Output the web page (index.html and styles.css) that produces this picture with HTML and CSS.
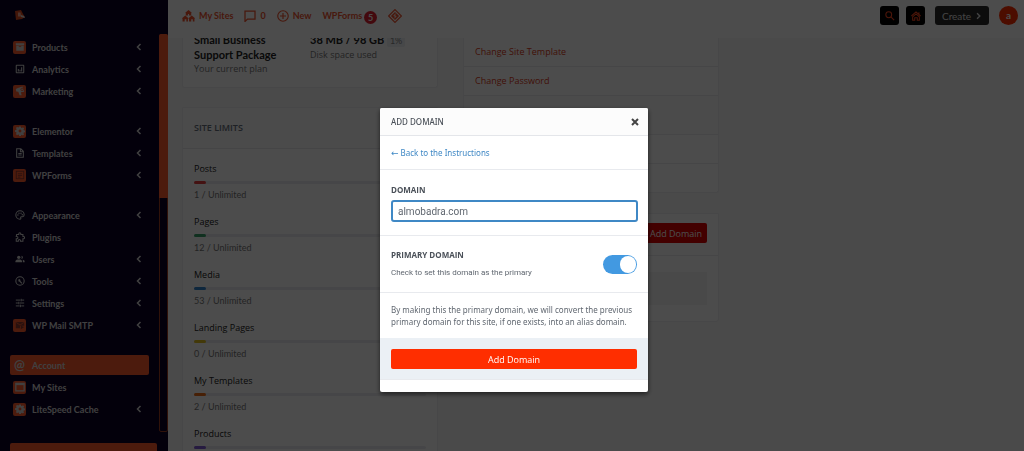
FILE: index.html
```
<!DOCTYPE html>
<html lang="en">
  <head>
    <meta charset="UTF-8" />
    <meta name="viewport" content="width=device-width, initial-scale=1.0" />
    <title>Account - Add Domain</title>
    <link rel="stylesheet" href="styles.css">
  </head>
  <body>
    <svg class="sprite" aria-hidden="true">
      <symbol id="chevron" viewBox="0 0 10 10"><path d="M6.500 2 3.500 5l3 3" fill="none" stroke="currentColor" stroke-width="1.500"/></symbol>
      <symbol id="gear" viewBox="0 0 24 24"><path fill="currentColor" fill-rule="evenodd" d="M10 1h4l.6 3 2 .9L19.200 3.200 22 6l-1.700 2.500.8 1.900 2.900.6v4l-3 .6-.8 1.900L21.900 20l-2.900 2.800-2.400-1.700-2 .8L14 24h-4l-.6-3-2-.8L4.900 22 2.100 19.100l1.700-2.400-.8-2L0 14v-4l3-.6.8-2L2.100 5 5 2.100l2.400 1.700 2-.8zM12 8.500a3.500 3.500 0 1 0 0 7 3.500 3.500 0 0 0 0-7z"/></symbol>
    </svg>

    <div class="page">
      <aside class="sidebar">
        <div class="brand">
          <svg width="12" height="12" viewBox="0 0 12 12"><path d="M1 2 7 1l2 4 2 3-3 2-6 1z" fill="#e04a20"/><path d="M4 3.500h2.500l.5 4H4z" fill="#ffb09a"/><path d="m7 6 3 1 1 2-4-1z" fill="#ddd"/></svg>
        </div>
        <div class="side-body">
          <nav>
            <ul>
              <li><a href="#"><span class="icon tile"><svg viewBox="0 0 24 24"><path d="M2 3h20v5H2zM3 9h18v12H3z" fill="currentColor"/><path d="M9 11h6" stroke="#ff5a2e" stroke-width="2"/></svg></span>Products<svg class="chev"><use href="#chevron"/></svg></a></li>
              <li><a href="#"><span class="icon"><svg viewBox="0 0 24 24" fill="none" stroke="currentColor" stroke-width="2.500"><rect x="3" y="3" width="18" height="18" rx="1"/><path d="M8 12v6M12 14v4M16 8v10"/></svg></span>Analytics<svg class="chev"><use href="#chevron"/></svg></a></li>
              <li><a href="#"><span class="icon tile"><svg viewBox="0 0 24 24"><path d="M2 7 7 5l11-4 4 13-8 1 2 7h-5l-3-8-5-1z" fill="currentColor"/><circle cx="17" cy="8" r="3" fill="none" stroke="#ff5a2e" stroke-width="2"/></svg></span>Marketing<svg class="chev"><use href="#chevron"/></svg></a></li>
            </ul>
            <ul>
              <li><a href="#"><span class="icon tile"><svg viewBox="0 0 24 24"><use href="#gear"/></svg></span>Elementor<svg class="chev"><use href="#chevron"/></svg></a></li>
              <li><a href="#"><span class="icon"><svg viewBox="0 0 24 24" fill="none" stroke="currentColor" stroke-width="2.500"><path d="M4 2h10l6 6v14H4zM13 2v7h7M8 13h8M8 17h8"/></svg></span>Templates<svg class="chev"><use href="#chevron"/></svg></a></li>
              <li><a href="#"><span class="icon tile dim"><svg viewBox="0 0 24 24" fill="none" stroke="currentColor" stroke-width="2"><rect x="3" y="3" width="18" height="18"/><path d="M7 9h10M7 13h10M7 17h6"/></svg></span>WPForms<svg class="chev"><use href="#chevron"/></svg></a></li>
            </ul>
            <ul>
              <li><a href="#"><span class="icon"><svg viewBox="0 0 24 24"><path d="M12 2a10 10 0 1 0 0 20c2 0 2.500-1.500 1.800-3-.8-1.700.2-3 1.700-3H18c2.500 0 4-2 4-4.500C22 6 17.500 2 12 2z" fill="none" stroke="currentColor" stroke-width="2.500"/><g fill="currentColor"><circle cx="7" cy="12" r="1.700"/><circle cx="9.500" cy="7.500" r="1.700"/><circle cx="14.500" cy="7.500" r="1.700"/><circle cx="17.500" cy="11.500" r="1.700"/></g></svg></span>Appearance<svg class="chev"><use href="#chevron"/></svg></a></li>
              <li><a href="#"><span class="icon"><svg viewBox="0 0 24 24"><path d="M4 6h5V4.500a2.500 2.500 0 0 1 5 0V6h5v5h1.500a2.500 2.500 0 0 1 0 5H19v6h-6v-1.500a2.500 2.500 0 0 0-5 0V22H3v-6h1.500a2.500 2.500 0 0 0 0-5H3z" fill="none" stroke="currentColor" stroke-width="2.500"/></svg></span>Plugins</a></li>
              <li><a href="#"><span class="icon"><svg viewBox="0 0 24 24" fill="currentColor"><circle cx="9" cy="8" r="4"/><path d="M1 20v-3c0-3 5-4 8-4s8 1 8 4v3zM15 4a4 4 0 0 1 0 8c1.500-2 1.500-6 0-8zM18 13.500c3 .5 5 1.500 5 3.500v3h-4v-3c0-1.500 0-2.500-1-3.500z"/></svg></span>Users<svg class="chev"><use href="#chevron"/></svg></a></li>
              <li><a href="#"><span class="icon"><svg viewBox="0 0 24 24"><circle cx="12" cy="12" r="10" fill="none" stroke="currentColor" stroke-width="2.500"/><path d="M7.500 7.500a4 4 0 0 1 5.500 4.500l4.500 4.500-2 2-4.500-5a4 4 0 0 1-4-4l2 1 1-1z" fill="currentColor"/></svg></span>Tools<svg class="chev"><use href="#chevron"/></svg></a></li>
              <li><a href="#"><span class="icon"><svg viewBox="0 0 24 24" fill="none" stroke="currentColor" stroke-width="2.300"><path d="M2 5h11M17 5h5M15 2v6M2 12h5M11 12h11M9 9v6M2 19h9M15 19h7M13 16v6"/></svg></span>Settings<svg class="chev"><use href="#chevron"/></svg></a></li>
              <li><a href="#"><span class="icon tile dim"><svg viewBox="0 0 24 24"><path d="M2 5h20v9H12v6H2z" fill="currentColor"/><path d="m3 6 9 6 9-6" fill="none" stroke="#ff5a2e" stroke-width="2"/><path d="m14 14 8 3-8 5z" fill="currentColor"/></svg></span>WP Mail SMTP<svg class="chev"><use href="#chevron"/></svg></a></li>
            </ul>
            <ul>
              <li><a href="#" class="active"><span class="icon at">@</span>Account</a></li>
              <li><a href="#"><span class="icon tile"><svg viewBox="0 0 24 24"><path d="M2 3h20v18H2z" fill="none" stroke="currentColor" stroke-width="3"/><path d="M2 5h20" stroke="currentColor" stroke-width="5"/></svg></span>My Sites</a></li>
              <li><a href="#"><span class="icon tile"><svg viewBox="0 0 24 24"><use href="#gear"/></svg></span>LiteSpeed Cache<svg class="chev"><use href="#chevron"/></svg></a></li>
            </ul>
          </nav>
          <div class="scrollbar"><div class="thumb"></div></div>
        </div>
        <div class="side-foot"></div>
      </aside>

      <div class="main">
        <header class="topbar">
          <a href="#"><svg width="13" height="13" viewBox="0 0 24 24" fill="currentColor" fill-rule="evenodd"><path d="m12 2 6 5-1 1v4h-4V9h-2v3H7V8L6 7zM6 12l6 5-1 1v5H8v-4H5v4H1v-5l-1-1zM18 12l6 5-1 1v5h-3v-4h-3v4h-4v-5l-1-1z"/></svg>My Sites</a>
          <a href="#" class="comments"><svg width="12" height="12" viewBox="0 0 24 24" fill="none" stroke="currentColor" stroke-width="2.500"><path d="M2 2h20v16H7l-5 5z"/></svg>0</a>
          <a href="#"><svg width="12" height="12" viewBox="0 0 24 24" fill="none" stroke="currentColor" stroke-width="2.300"><circle cx="12" cy="12" r="10.500"/><path d="M12 6v12M6 12h12"/></svg>New</a>
          <a href="#" class="forms">WPForms<span class="count">5</span></a>
          <a href="#" aria-label="LiteSpeed"><svg width="14" height="14" viewBox="0 0 24 24"><path d="m12 1 11 11-11 11L1 12z" fill="none" stroke="currentColor" stroke-width="2"/><path d="m12 5 7 7-7 7-7-7z" fill="currentColor"/><path d="m13 8-3 4h4l-3 4" fill="none" stroke="#fff" stroke-width="1.500"/></svg></a>
          <div class="actions">
            <button class="square" aria-label="Search"><svg width="10" height="10" viewBox="0 0 24 24" fill="none" stroke="currentColor" stroke-width="2.500"><circle cx="9" cy="9" r="7"/><path d="m14 14 8 8"/></svg></button>
            <button class="square" aria-label="Home"><svg width="10" height="10" viewBox="0 0 24 24" fill="none" stroke="currentColor" stroke-width="2.500"><path d="M1 12 12 2l11 10M4 14 12 7l8 7v8h-5v-6H9v6H4zM19 3v5"/></svg></button>
            <button class="create">Create<svg width="8" height="8" viewBox="0 0 10 10"><path d="m3 1 4 4-4 4" fill="none" stroke="currentColor" stroke-width="2"/></svg></button>
            <span class="avatar">a</span>
          </div>
        </header>

        <div class="content">
          <div class="column">
            <section class="card plan">
              <div><strong>Small Business Support Package</strong><p>Your current plan</p></div>
              <div><strong>38 MB / 98 GB <span class="percent">1%</span></strong><p>Disk space used</p></div>
            </section>
            <section class="card limits">
              <h2>SITE LIMITS</h2>
              <div class="limit"><h3>Posts</h3><div class="bar"><div class="fill red"></div></div><p>1 / Unlimited</p></div>
              <div class="limit"><h3>Pages</h3><div class="bar"><div class="fill green"></div></div><p>12 / Unlimited</p></div>
              <div class="limit"><h3>Media</h3><div class="bar"><div class="fill blue"></div></div><p>53 / Unlimited</p></div>
              <div class="limit"><h3>Landing Pages</h3><div class="bar"><div class="fill yellow"></div></div><p>0 / Unlimited</p></div>
              <div class="limit"><h3>My Templates</h3><div class="bar"><div class="fill orange"></div></div><p>2 / Unlimited</p></div>
              <div class="limit"><h3>Products</h3><div class="bar"><div class="fill purple"></div></div></div>
            </section>
          </div>
          <div class="column">
            <section class="card links">
              <a href="#">Change Site Template</a>
              <a href="#">Change Password</a>
              <div class="links-head"></div>
              <div class="links-row"></div>
              <div class="links-row"></div>
            </section>
            <section class="card domains">
              <div class="domains-head"><button>Add Domain</button></div>
              <div class="domains-body"><div class="empty"></div></div>
            </section>
          </div>
        </div>
      </div>
    </div>

    <div class="overlay">
      <form class="modal" role="dialog" aria-labelledby="modalTitle">
        <div class="modal-head">
          <h1 id="modalTitle">ADD DOMAIN</h1>
          <button type="button" class="close" aria-label="Close"><svg width="8" height="8" viewBox="0 0 8 8"><path d="m1 1 6 6M7 1 1 7" stroke="currentColor" stroke-width="2"/></svg></button>
        </div>
        <div class="back"><a href="#"><span class="arrow">←</span>Back to the Instructions</a></div>
        <div class="field">
          <label for="domain">DOMAIN</label>
          <input type="text" id="domain" value="almobadra.com">
        </div>
        <div class="primary">
          <div>
            <label for="primary">PRIMARY DOMAIN</label>
            <p>Check to set this domain as the primary</p>
          </div>
          <input type="checkbox" id="primary" class="toggle" checked>
        </div>
        <p class="note">By making this the primary domain, we will convert the previous primary domain for this site, if one exists, into an alias domain.</p>
        <div class="modal-foot"><button type="button">Add Domain</button></div>
      </form>
    </div>
  </body>
</html>
```
FILE: styles.css
```
* {
  box-sizing: border-box;
}

body {
  margin: 0;
  font-family: "Open Sans", "Noto Sans", sans-serif;
  font-size: 9px;
  color: #222;
  background: #f7f7f7;
}

h1, h2, h3, p, ul {
  margin: 0;
  padding: 0;
}

a {
  color: inherit;
  text-decoration: none;
}

button {
  font-family: inherit;
  border: none;
  cursor: pointer;
}

.sprite {
  position: absolute;
  width: 0;
  height: 0;
}

.page {
  display: flex;
  height: 100vh;
  overflow: hidden;
}

/* Sidebar */
.sidebar {
  width: 168px;
  flex-shrink: 0;
  display: flex;
  flex-direction: column;
  background: #0b0226;
  color: #d8d8d8;
}

.brand {
  height: 34px;
  flex-shrink: 0;
  padding: 9px 14px;
}

.side-body {
  display: flex;
  justify-content: space-between;
  height: 398px;
  flex-shrink: 0;
}

nav {
  width: 139px;
  margin-left: 10px;
  padding-top: 2px;
  display: flex;
  flex-direction: column;
  gap: 18px;
}

nav ul {
  list-style: none;
}

nav li {
  height: 22px;
  padding: 1px 0;
}

nav a {
  display: flex;
  align-items: center;
  height: 20px;
  padding: 0 5px 0 3px;
  border-radius: 2px;
  font-family: Lato, sans-serif;
  font-size: 9px;
  font-weight: 700;
}

nav .active {
  background: #ff5a2e;
}

.icon {
  width: 13px;
  height: 13px;
  margin-right: 6px;
  padding: 1px;
  display: flex;
  align-items: center;
  justify-content: center;
  border-radius: 2px;
}

.icon svg {
  width: 10px;
  height: 10px;
}

.tile {
  background: #ff5a2e;
}

.dim {
  color: #8a3a30;
}

.at {
  font-size: 13px;
  line-height: 12px;
}

.chev {
  width: 10px;
  height: 10px;
  margin-left: auto;
}

.scrollbar {
  width: 9px;
  border: 1px solid #a03c20;
  border-radius: 2px;
}

.thumb {
  height: 164px;
  margin: -1px;
  background: #ff5a2e;
  border-radius: 2px 2px 0 0;
}

.side-foot {
  height: 20px;
  flex-shrink: 0;
  margin: 11px 11px 0 10px;
  background: #ff5a2e;
  border-radius: 2px 2px 0 0;
}

/* Top bar */
.main {
  flex: 1;
  min-width: 0;
}

.topbar {
  height: 38px;
  display: flex;
  align-items: center;
  gap: 11px;
  padding: 0 6px 7px 14px;
  background: #fdfdfd;
  font-family: Lato, sans-serif;
  font-size: 9px;
  font-weight: 700;
  color: #f0532e;
}

.topbar a {
  display: flex;
  align-items: center;
  gap: 4px;
}

.topbar .forms {
  gap: 2px;
}

.count {
  width: 13px;
  margin-top: 4px;
  border-radius: 7px;
  background: #e02030;
  color: #fff;
  line-height: 13px;
  text-align: center;
}

.actions {
  margin-left: auto;
  display: flex;
  align-items: center;
  gap: 7px;
}

.square {
  width: 19px;
  height: 19px;
  padding: 0;
  display: flex;
  align-items: center;
  justify-content: center;
  border-radius: 3px;
  background: #000;
  color: #ff4a20;
}

.create {
  width: 54px;
  height: 19px;
  margin: 0 3px;
  padding: 0 7px;
  display: flex;
  align-items: center;
  gap: 4px;
  border-radius: 3px;
  background: #2b2b2b;
  color: #e0e0e0;
  font-family: Lato, sans-serif;
  font-size: 10px;
  font-weight: 400;
}

.avatar {
  width: 19px;
  height: 19px;
  border-radius: 50%;
  background: #ff2e00;
  color: #fff;
  font-size: 10px;
  line-height: 18px;
  text-align: center;
}

/* Account cards */
.content {
  display: flex;
  gap: 25px;
  padding: 0 14px;
}

.column {
  width: 30%;
  min-width: 256px;
}

.card {
  background: #fff;
  border: 1px solid #ededf0;
  border-radius: 0 0 3px 3px;
}

.plan {
  height: 50px;
  margin-bottom: 19px;
  padding: 0 11px;
  display: flex;
  border-top: none;
}

.plan div {
  flex: 1;
}

.plan strong {
  display: block;
  margin-top: -6px;
  padding-right: 20px;
  font-family: Lato, sans-serif;
  font-size: 11px;
  line-height: 15px;
  clip-path: inset(6px 0 0 0);
}

.plan div + div strong {
  padding-right: 0;
}

.plan p {
  font-size: 9px;
  line-height: 14px;
  color: #777;
}

.percent {
  padding: 1px 3px;
  border-radius: 2px;
  background: #edf0f4;
  color: #888;
  font-size: 9px;
  font-weight: 400;
}

.limits h2 {
  height: 41px;
  margin-bottom: 12px;
  padding-left: 11px;
  border-bottom: 1px solid #e8e8ec;
  background: #fafafa;
  font-size: 9px;
  font-weight: 600;
  line-height: 39px;
  color: #666e7c;
}

.limit {
  height: 53px;
  padding: 0 11px;
}

.limit h3 {
  font-size: 9px;
  font-weight: 400;
  line-height: 16px;
}

.limit p {
  font-family: Lato, sans-serif;
  font-size: 9px;
  line-height: 12px;
  color: #777;
}

.bar {
  height: 3px;
  margin: 4px 0 5px;
  border-radius: 2px;
  background: #ececf0;
}

.fill {
  width: 5%;
  height: 3px;
  border-radius: 2px;
}

.red { background: #e53e3e; }
.green { background: #38a169; }
.blue { background: #3182ce; }
.yellow { background: #e0c020; }
.orange { background: #ed6c16; }
.purple { background: #805ad5; }

.links {
  margin-bottom: 20px;
  border-top: none;
}

.links a {
  display: block;
  height: 29px;
  padding-left: 11px;
  border-bottom: 1px solid #ebebee;
  line-height: 27px;
  color: #d93a20;
}

.links-head {
  height: 38px;
  background: #fafafa;
}

.links-row {
  height: 29px;
  border-top: 1px solid #ebebee;
}

.domains-head {
  height: 42px;
  padding: 9px 11px;
  display: flex;
  justify-content: flex-end;
  border-bottom: 1px solid #ebebee;
}

.domains-head button {
  width: 62px;
  height: 20px;
  padding: 0;
  border-radius: 2px;
  background: #e00000;
  color: #fff;
  font-size: 9px;
}

.domains-body {
  padding: 16px 11px;
}

.empty {
  height: 33px;
  background: #f5f5f5;
}

/* Dialog */
.overlay {
  position: fixed;
  inset: 0;
  display: flex;
  justify-content: center;
  align-items: flex-start;
  padding: 108px 0 0 4px;
  background: rgba(0, 0, 0, 0.7);
}

.modal {
  width: 268px;
  padding-bottom: 12px;
  border-radius: 2px;
  background: #fff;
  box-shadow: 0 2px 5px rgba(0, 0, 0, 0.6);
  font-family: "Noto Sans", "Open Sans", sans-serif;
  font-size: 8px;
  color: #606770;
}

.modal-head {
  height: 28px;
  padding: 0 9px 0 11px;
  display: flex;
  align-items: center;
  justify-content: space-between;
  border-bottom: 1px solid #e4e6ea;
  border-radius: 2px 2px 0 0;
  background: #fcfcfc;
}

.modal-head h1 {
  font-size: 8px;
  font-weight: 500;
  color: #4a5058;
}

.close {
  display: flex;
  padding: 0;
  background: none;
  color: #444;
}

.back {
  height: 34px;
  padding-left: 11px;
  border-bottom: 1px solid #e8eaee;
  line-height: 33px;
  color: #3f88c5;
}

.arrow {
  margin-right: 2px;
  font-family: "DejaVu Sans", sans-serif;
  font-size: 9px;
}

.field {
  height: 66px;
  padding: 14px 10px 0 11px;
  border-bottom: 1px solid #e8eaee;
}

.modal label {
  display: block;
  font-family: "Open Sans", sans-serif;
  font-size: 8px;
  font-weight: 700;
  line-height: 12px;
  color: #4a5058;
}

.field input {
  width: 100%;
  height: 22px;
  margin-top: 4px;
  padding: 0 5px;
  border: 2px solid #3f88c5;
  border-radius: 3px;
  outline: none;
  font-family: Roboto, sans-serif;
  font-size: 10px;
  color: #606770;
}

.primary {
  height: 57px;
  padding: 0 11px;
  display: flex;
  align-items: center;
  justify-content: space-between;
  border-bottom: 1px solid #e8eaee;
}

.primary p {
  margin-top: 6px;
  font-family: Roboto, sans-serif;
  line-height: 12px;
}

.toggle {
  appearance: none;
  width: 34px;
  height: 19px;
  margin: 0;
  display: flex;
  justify-content: flex-end;
  padding: 1px;
  border-radius: 10px;
  background: #4299e1;
  cursor: pointer;
}

.toggle::before {
  content: "";
  width: 16px;
  height: 17px;
  border-radius: 8px;
  background: #fff;
}

.note {
  padding: 11px 11px 10px;
  line-height: 12px;
}

.modal-foot {
  padding: 11px 11px 10px;
  border-bottom: 1px solid #e8eaee;
  background: #ebf0f5;
}

.modal-foot button {
  width: 100%;
  height: 20px;
  border-radius: 2px;
  background: #ff2e00;
  color: #fff;
  font-family: "Open Sans", sans-serif;
  font-size: 9px;
}
```
